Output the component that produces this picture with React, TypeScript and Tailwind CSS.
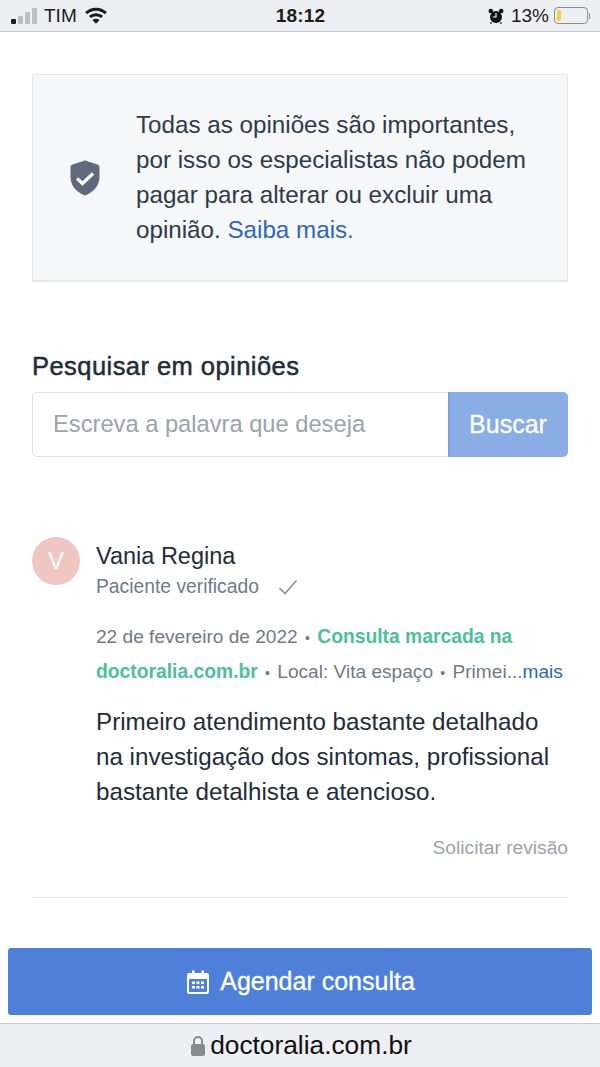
import React from 'react';

const SANS = "font-['Liberation_Sans',Arial,sans-serif]";

const Dot = () => <span className="mx-[2px] text-[14px]">•</span>;

const StatusBar = () => (
  <div className="flex h-8 items-center justify-between border-b border-[#c9cacd] bg-[#eeeff2] pl-[11px] pr-[10px] text-[#1c1c1e]">
    <div className="flex w-[200px] items-center">
      <div className="flex items-end gap-[2px]">
        <span className="h-[5px] w-[5px] rounded-[1px] bg-[#1c1c1e]" />
        <span className="h-[8px] w-[5px] rounded-[1px] bg-[#bdbec1]" />
        <span className="h-[12px] w-[5px] rounded-[1px] bg-[#bdbec1]" />
        <span className="h-[16px] w-[5px] rounded-[1px] bg-[#bdbec1]" />
      </div>
      <span className="ml-[7px] text-[19px] leading-none">TIM</span>
      <svg viewBox="0 0 24 18" className="ml-[7px] h-[17px] w-[24px]" fill="none" stroke="#1c1c1e" strokeWidth="3">
        <path d="M1.5 6.5C7.5 1 16.5 1 22.5 6.5" />
        <path d="M5.5 10.5C9 7.4 15 7.4 18.5 10.5" />
        <path d="M12 17.8l-3.8-4c2.2-1.7 5.4-1.7 7.6 0z" fill="#1c1c1e" stroke="none" />
      </svg>
    </div>
    <span className="text-[19px] font-bold leading-none tracking-[0.2px]">18:12</span>
    <div className="flex w-[200px] items-center justify-end">
      <svg viewBox="0 0 16 16" className="h-[16px] w-[16px]">
        <circle cx="8" cy="9" r="6" fill="#111" />
        <circle cx="2.8" cy="3" r="2.3" fill="#111" />
        <circle cx="13.2" cy="3" r="2.3" fill="#111" />
        <path d="M8 5v4H4.8" fill="none" stroke="#fff" strokeWidth="1.2" />
        <path d="M3.5 14.5l-1 1M12.5 14.5l1 1" stroke="#111" strokeWidth="1.6" />
      </svg>
      <span className="ml-[7px] text-[19px] leading-none">13%</span>
      <div className="ml-[5px] flex h-[17px] w-[34px] items-center rounded-[4px] border border-[#8e8e90] p-[2px]">
        <span className="h-full w-[4px] rounded-[1px] bg-[#f7ce46]" />
      </div>
      <span className="ml-[1px] h-[6px] w-[1px] bg-[#8e8e90]" />
    </div>
  </div>
);

const ShieldIcon = () => (
  <svg viewBox="0 0 30 36" className="h-[36px] w-[30px] shrink-0">
    <path d="M15 0.5C16 0.5 17 1 18 1.4L27.5 4.6C28.8 5 29.5 6 29.5 7.2V17C29.5 26 23 32.5 15 35.5C7 32.5 0.5 26 0.5 17V7.2C0.5 6 1.2 5 2.5 4.6L12 1.4C13 1 14 0.5 15 0.5Z" fill="#5f6b7c" />
    <path d="M7 18.5L12.5 23.5L23 13.5" fill="none" stroke="#fff" strokeWidth="3.2" />
  </svg>
);

const CalendarIcon = () => (
  <svg viewBox="0 0 22 24" className="h-[24px] w-[22px]" fill="#fff">
    <path d="M5 0.5h2.5V3h7V0.5H17V3h3a2 2 0 0 1 2 2v17a2 2 0 0 1-2 2H2a2 2 0 0 1-2-2V5a2 2 0 0 1 2-2h3zM2 9v12.2c0 .5.3.8.8.8h16.4c.5 0 .8-.3.8-.8V9z" />
    <rect x="5" y="11.5" width="3" height="2.6" />
    <rect x="9.5" y="11.5" width="3" height="2.6" />
    <rect x="14" y="11.5" width="3" height="2.6" />
    <rect x="5" y="16" width="3" height="2.6" />
    <rect x="9.5" y="16" width="3" height="2.6" />
    <rect x="14" y="16" width="3" height="2.6" />
  </svg>
);

const App = () => {
  return (
    <div className={`flex h-[1067px] w-[600px] flex-col overflow-hidden bg-white ${SANS}`}>
      <StatusBar />

      <div className="flex-1 px-8 pt-[42px]">
        <div className="flex h-[207px] items-center border border-[#e2e5e9] bg-[#f6f7f9] shadow-[0_1px_1px_rgba(0,0,0,0.06)]">
          <div className="flex w-[103px] justify-center">
            <ShieldIcon />
          </div>
          <p className="pb-[2px] text-[24.2px] leading-[35px] text-[#2d3a4a]">
            Todas as opiniões são importantes,
            <br />
            por isso os especialistas não podem
            <br />
            pagar para alterar ou excluir uma
            <br />
            opinião. <span className="text-[#2f66bd]">Saiba mais.</span>
          </p>
        </div>

        <h2 className="mt-[68px] text-[25.5px] leading-[34px] tracking-[0.45px] text-[#222c3a] [-webkit-text-stroke:0.5px_#222c3a]">
          Pesquisar em opiniões
        </h2>
        <div className="mt-[9px] flex h-[65px]">
          <div className="flex flex-1 items-center rounded-l-[5px] border-[1.5px] border-r-0 border-[#dfe1e5] pl-5 text-[23.7px] text-[#9aa3ae]">
            Escreva a palavra que deseja
          </div>
          <div className="flex w-[120px] items-center justify-center rounded-r-[5px] border-l-2 border-[#7a9fdf] bg-[#8aade6] pr-[2px] text-[25px] text-white [-webkit-text-stroke:0.3px_#ffffff]">
            Buscar
          </div>
        </div>

        <div className="mt-[80px] flex">
          <div className="flex h-12 w-12 shrink-0 items-center justify-center rounded-full bg-[#efc6c1] text-[24px] text-white">
            V
          </div>
          <div className="ml-4 min-w-0 flex-1">
            <div className="text-[23.5px] leading-[38px] text-[#222c3a]">Vania Regina</div>
            <div className="flex items-center text-[19.3px] leading-[24px] text-[#6e7a8a]">
              Paciente verificado
              <svg viewBox="0 0 20 16" className="ml-[19px] h-[16px] w-[20px]" fill="none" stroke="#8b8f96" strokeWidth="1.6">
                <path d="M1.5 9L7 14.5L18.5 1.5" />
              </svg>
            </div>
            <div className="mt-[20px] text-[19.1px] leading-[35px] text-[#6e7a8a]">
              <div className="h-[35px] whitespace-nowrap">
                22 de fevereiro de 2022 <Dot />{' '}
                <span className="text-[19.3px] font-bold text-[#4dbf9d]">Consulta marcada na</span>
              </div>
              <div className="h-[35px] whitespace-nowrap">
                <span className="text-[19.3px] font-bold text-[#4dbf9d]">doctoralia.com.br</span> <Dot /> Local: Vita espaço <Dot /> Primei...
                <span className="text-[#2f66bd]">mais</span>
              </div>
            </div>
            <p className="mt-[15px] text-[24.2px] leading-[35px] text-[#222c3a]">
              Primeiro atendimento bastante detalhado
              <br />
              na investigação dos sintomas, profissional
              <br />
              bastante detalhista e atencioso.
            </p>
            <div className="mt-[27px] text-right text-[19.2px] leading-[24px] text-[#9aa3ae]">Solicitar revisão</div>
          </div>
        </div>
        <div className="mt-[37px] border-t border-[#e5e7ea]" />
      </div>

      <div className="px-2 pb-2">
        <div className="flex h-[67px] items-center justify-center gap-[11px] rounded-[3px] bg-[#4e80da] pl-[2px] text-[25px] text-white [-webkit-text-stroke:0.3px_#ffffff]">
          <CalendarIcon />
          Agendar consulta
        </div>
      </div>

      <div className="flex h-[44px] items-center justify-center gap-[5px] border-t border-[#c9cacd] bg-[#eeeff2] pl-[3px] text-[26.3px] text-[#111]">
        <svg viewBox="0 0 14 20" className="h-[20px] w-[14px]" fill="#8a8a8e">
          <rect x="0" y="8" width="14" height="12" rx="2" />
          <path d="M3 9V5a4 4 0 0 1 8 0v4" fill="none" stroke="#8a8a8e" strokeWidth="2" />
        </svg>
        doctoralia.com.br
      </div>
    </div>
  );
};

export default App;
